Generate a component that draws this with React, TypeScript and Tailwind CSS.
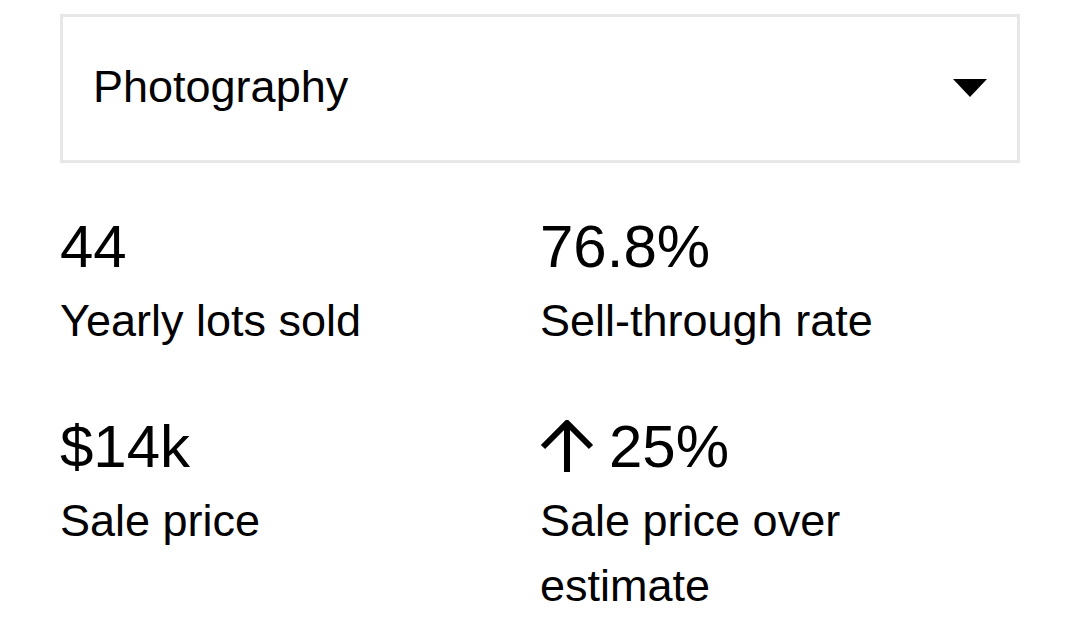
const stats = [
  { value: "44", label: "Yearly lots sold" },
  { value: "76.8%", label: "Sell-through rate" },
  { value: "$14k", label: "Sale price" },
  { value: "25%", label: "Sale price over estimate", up: true },
];

const ArrowUp = () => (
  <svg width="54" height="54" viewBox="0 0 54 54" fill="none" className="mr-[15px] shrink-0">
    <path d="M27 52V4M3 27L27 3l24 24" stroke="#000" strokeWidth="6" strokeLinejoin="miter" />
  </svg>
);

export default function App() {
  return (
    <div
      className="min-h-screen bg-white px-[60px] pt-[14px] text-black"
      style={{ fontFamily: '"Liberation Sans", Arial, sans-serif' }}
    >
      <div className="flex h-[149px] w-[960px] items-center justify-between border-[3px] border-[#e7e7e7] pb-[4px] pl-[30px] pr-[30px]">
        <span className="text-[45px] leading-none">Photography</span>
        <svg width="34" height="18" viewBox="0 0 34 18" className="mt-[2px]">
          <path d="M0 0h34L17 18z" fill="#000" />
        </svg>
      </div>

      <div className="mt-[48px] grid w-[960px] grid-cols-2 gap-y-[58px]">
        {stats.map((s) => (
          <div key={s.label} className="flex flex-col">
            <div className="flex items-center text-[60px] leading-[72px]">
              {s.up && <ArrowUp />}
              <span>{s.value}</span>
            </div>
            <div className="mt-[5px] max-w-[340px] text-[45px] leading-[65px]">{s.label}</div>
          </div>
        ))}
      </div>
    </div>
  );
}
